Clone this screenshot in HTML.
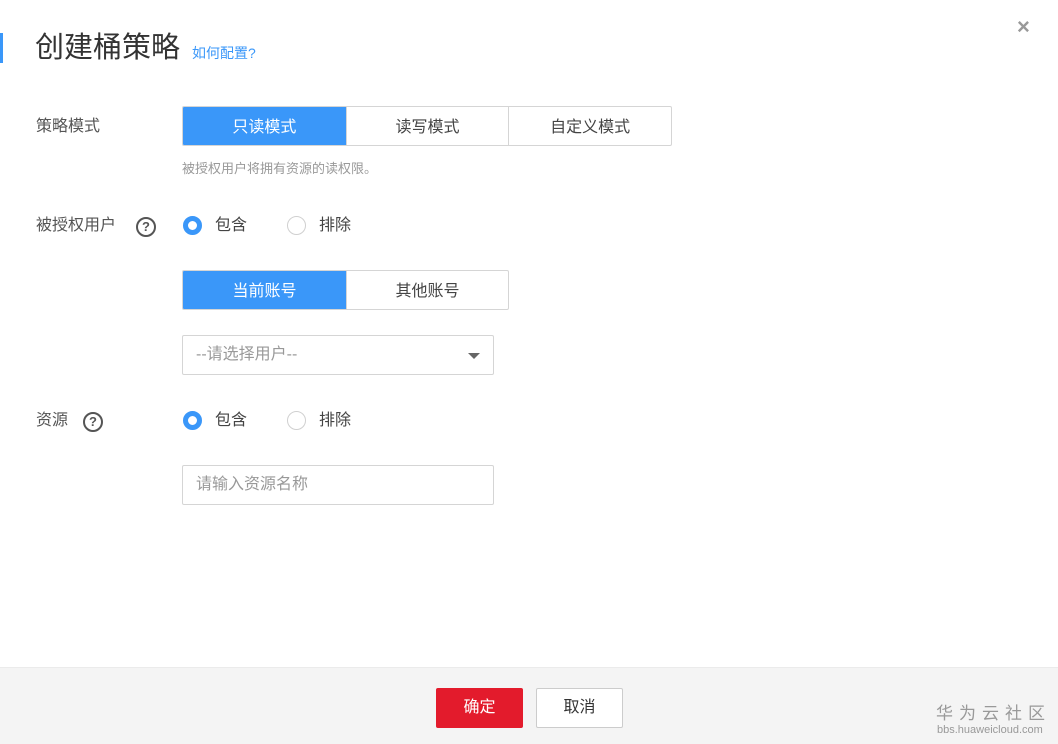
<!DOCTYPE html>
<html><head><meta charset="utf-8"><style>
*{margin:0;padding:0;box-sizing:border-box}
body{width:1058px;height:744px;background:#fff;font-family:"Liberation Sans","Noto Sans CJK SC",sans-serif;color:#333;position:relative;overflow:hidden}
.a{position:absolute;white-space:nowrap}
.lbl{font-size:16px;color:#555;line-height:20px}
.seg{position:absolute;display:flex;height:40px;border:1px solid #d5d5d5;border-radius:2px;overflow:hidden}
.seg div{display:flex;align-items:center;justify-content:center;font-size:16px;color:#444;border-left:1px solid #d5d5d5;padding-bottom:2px}
.seg div:first-child{border-left:none}
.seg .on{background:#3a97f9;color:#fff}
.radio{position:absolute;width:19px;height:19px;border-radius:50%;border:1px solid #d0d0d0;background:#fff}
.radio.on{border:5px solid #3a97f9}
.help{position:absolute;width:20px;height:20px;border-radius:50%;border:2px solid #555;font-size:13px;font-weight:bold;color:#555;text-align:center;line-height:16px}
.box{position:absolute;border:1px solid #d5d5d5;border-radius:2px;height:40px;font-size:16px;color:#999;padding-left:13px;line-height:38px}
</style></head><body>
<div class="a" style="left:0;top:33px;width:3px;height:30px;background:#3a97f9"></div>
<div class="a" style="left:35px;top:30px;font-size:29px;color:#333;line-height:36px">创建桶策略</div>
<div class="a" style="left:192px;top:44px;font-size:14px;color:#3a97f9;line-height:18px">如何配置?</div>
<div class="a" style="left:1017px;top:14px;font-size:22px;color:#999;line-height:26px;font-weight:bold">×</div>

<div class="a lbl" style="left:36px;top:117px">策略模式</div>
<div class="seg" style="left:182px;top:106px;width:490px">
<div class="on" style="width:163px">只读模式</div><div style="width:163px">读写模式</div><div style="width:163px">自定义模式</div></div>
<div class="a" style="left:182px;top:160px;font-size:13px;color:#999;line-height:18px">被授权用户将拥有资源的读权限。</div>

<div class="a lbl" style="left:36px;top:216px">被授权用户</div>
<div class="help" style="left:136px;top:217px">?</div>
<div class="radio on" style="left:183px;top:216px"></div>
<div class="a lbl" style="left:215px;top:216px;color:#444">包含</div>
<div class="radio" style="left:287px;top:216px"></div>
<div class="a lbl" style="left:319px;top:216px;color:#444">排除</div>

<div class="seg" style="left:182px;top:270px;width:327px">
<div class="on" style="width:164px">当前账号</div><div style="width:163px">其他账号</div></div>

<div class="box" style="left:182px;top:335px;width:312px">--请选择用户--
<div class="a" style="right:13px;top:17px;width:0;height:0;border-left:6px solid transparent;border-right:6px solid transparent;border-top:6px solid #666"></div></div>

<div class="a lbl" style="left:36px;top:411px">资源</div>
<div class="help" style="left:83px;top:412px">?</div>
<div class="radio on" style="left:183px;top:411px"></div>
<div class="a lbl" style="left:215px;top:411px;color:#444">包含</div>
<div class="radio" style="left:287px;top:411px"></div>
<div class="a lbl" style="left:319px;top:411px;color:#444">排除</div>

<div class="box" style="left:182px;top:465px;width:312px">请输入资源名称</div>

<div class="a" style="left:0;top:667px;width:1058px;height:77px;background:#f4f4f4;border-top:1px solid #ebebeb"></div>
<div class="a" style="left:436px;top:688px;width:87px;height:40px;background:#e31b2c;border-radius:2px;color:#fff;font-size:16px;text-align:center;line-height:40px">确定</div>
<div class="a" style="left:536px;top:688px;width:87px;height:40px;background:#fff;border:1px solid #ccc;border-radius:2px;color:#333;font-size:16px;text-align:center;line-height:38px">取消</div>
<div class="a" style="left:936px;top:704px;font-size:17px;color:#999;letter-spacing:6px;line-height:20px">华为云社区</div>
<div class="a" style="left:937px;top:724px;font-size:11px;color:#999;line-height:13px">bbs.huaweicloud.com</div>
</body></html>
